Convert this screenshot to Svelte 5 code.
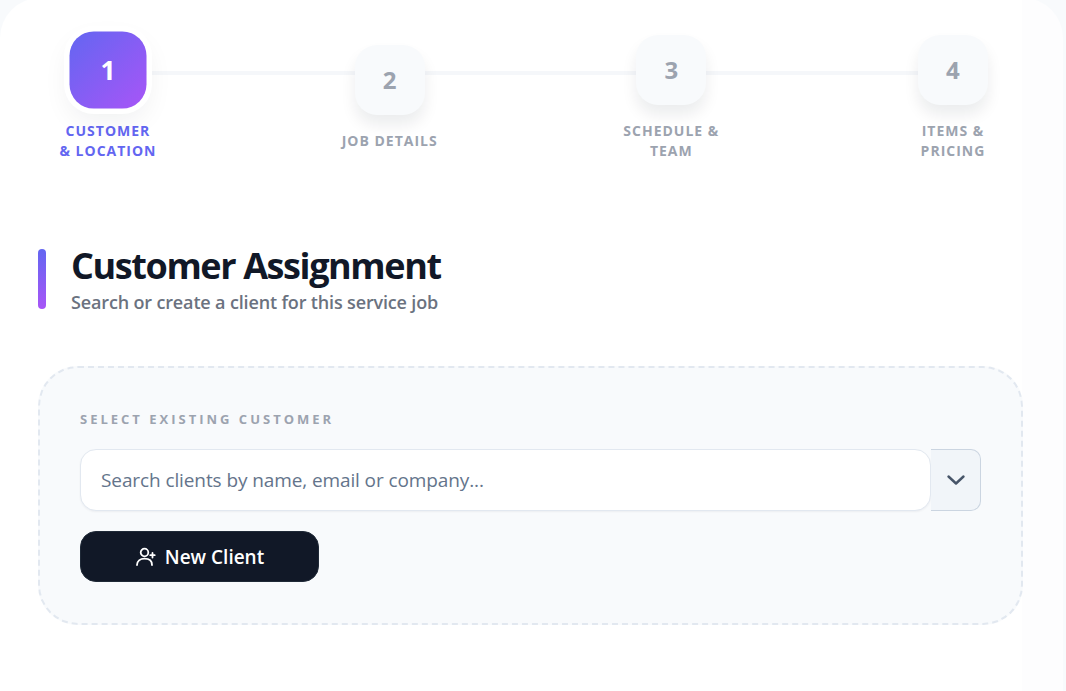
<script>
  const steps = [
    { n: 1, label: ['CUSTOMER', '& LOCATION'], active: true },
    { n: 2, label: ['JOB DETAILS'] },
    { n: 3, label: ['SCHEDULE &', 'TEAM'] },
    { n: 4, label: ['ITEMS &', 'PRICING'] }
  ];
</script>

<div class="page">
  <main class="card">
    <div class="stepper">
      <span class="line"></span>
      {#each steps as step}
        <div class="step" class:active={step.active}>
          <div class="box">{step.n}</div>
          <div class="label">
            {#each step.label as text}
              <span>{text}</span>
            {/each}
          </div>
        </div>
      {/each}
    </div>

    <header class="heading">
      <span class="accent"></span>
      <div>
        <h1>Customer Assignment</h1>
        <p>Search or create a client for this service job</p>
      </div>
    </header>

    <section class="panel">
      <label class="field-label" for="client">SELECT EXISTING CUSTOMER</label>
      <div class="select">
        <input id="client" type="text" placeholder="Search clients by name, email or company..." />
        <button class="toggle" aria-label="Toggle list">
          <svg width="20" height="20" viewBox="0 0 20 20" fill="none" stroke="#475569" stroke-width="2.4" stroke-linecap="round" stroke-linejoin="round">
            <path d="M2.500 6.500l7.500 7 7.500-7" />
          </svg>
        </button>
      </div>
      <button class="new-client">
        <svg width="22" height="22" viewBox="0 0 22 22" fill="none" stroke="#fff" stroke-width="1.8" stroke-linecap="round" stroke-linejoin="round">
          <circle cx="9.500" cy="6.500" r="3.800" />
          <path d="M2 19c0-4 3-6.300 7.500-6.300S17 15 17 19" />
          <path d="M17.500 7v4.500M15.300 9.200h4.400" />
        </svg>
        New Client
      </button>
    </section>
  </main>
</div>

<style>
  :global(body) {
    background: #f8fafc;
    font-family: "Open Sans", "Noto Sans", sans-serif;
  }

  .page {
    height: 691px;
    overflow: hidden;
  }

  .card {
    box-sizing: border-box;
    width: 1063px;
    height: 693px;
    margin-top: -2px;
    padding: 37px 40px 0 38px;
    border-radius: 40px 40px 0 0;
    background: linear-gradient(to right, #fff 1022px, #fdfdfe 1022px);
  }

  .stepper {
    position: relative;
    display: flex;
    justify-content: space-between;
    align-items: center;
  }

  .line {
    position: absolute;
    left: 70px;
    right: 70px;
    top: 36px;
    height: 4px;
    background: #f5f7fa;
  }

  .step {
    position: relative;
    width: 140px;
    display: flex;
    flex-direction: column;
    align-items: center;
    gap: 16px;
  }

  .box {
    box-sizing: border-box;
    width: 70px;
    height: 70px;
    display: flex;
    align-items: center;
    justify-content: center;
    padding-bottom: 2px;
    border-radius: 22px;
    background: #f8fafc;
    color: #9ca3af;
    font-size: 24px;
    font-weight: 700;
    box-shadow: 0 10px 15px rgba(15, 23, 42, 0.08);
  }

  .active .box {
    background: linear-gradient(135deg, #6366f1, #a855f7);
    color: #fff;
    transform: scale(1.1);
    box-shadow: 0 0 0 5px #fff, 0 10px 25px rgba(15, 23, 42, 0.07);
  }

  .label {
    display: flex;
    flex-direction: column;
    align-items: center;
    color: #9ca3af;
    font-size: 14px;
    font-weight: 700;
    line-height: 20px;
    letter-spacing: 1px;
    white-space: nowrap;
  }

  .active .label {
    color: #6366f1;
  }

  .heading {
    display: flex;
    gap: 25px;
    margin-top: 88px;
    align-items: center;
    height: 60px;
  }

  .accent {
    width: 8px;
    height: 60px;
    border-radius: 4px;
    background: linear-gradient(to bottom, #6366f1, #a855f7);
  }

  h1 {
    margin: 0;
    color: #111827;
    font-size: 36px;
    font-weight: 700;
    line-height: 44px;
    letter-spacing: -1.4px;
  }

  .heading p {
    margin: 2px 0 0;
    color: #6b7280;
    font-size: 18px;
    font-weight: 600;
    line-height: 24px;
    letter-spacing: -0.15px;
  }

  .panel {
    box-sizing: border-box;
    height: 259px;
    margin-top: 57px;
    padding: 41px 40px 0;
    border: 2px dashed #e2e8f0;
    border-radius: 40px;
    background: #f8fafc;
  }

  .field-label {
    display: block;
    color: #9ca3af;
    font-size: 13px;
    font-weight: 700;
    line-height: 20px;
    letter-spacing: 3px;
  }

  .select {
    display: flex;
    margin-top: 20px;
  }

  input {
    flex: 1;
    box-sizing: border-box;
    height: 62px;
    padding: 0 20px;
    border: 1px solid #e2e8f0;
    border-radius: 16px;
    background: #fff;
    font: 400 19px "Open Sans", sans-serif;
    letter-spacing: -0.1px;
    box-shadow: 0 1px 2px rgba(15, 23, 42, 0.05);
    outline: none;
  }

  input::placeholder {
    color: #64748b;
    opacity: 1;
  }

  .toggle {
    width: 50px;
    height: 62px;
    display: flex;
    align-items: center;
    justify-content: center;
    padding: 0;
    border: 1px solid #cbd5e1;
    border-left: 0;
    border-radius: 0 10px 10px 0;
    background: #f1f5f9;
  }

  .new-client {
    width: 239px;
    height: 51px;
    display: flex;
    align-items: center;
    justify-content: center;
    gap: 8px;
    margin-top: 20px;
    padding: 0;
    border: 1px solid #1f2937;
    border-radius: 16px;
    background: #111827;
    color: #fff;
    font: 600 19px "Open Sans", sans-serif;
  }
</style>
